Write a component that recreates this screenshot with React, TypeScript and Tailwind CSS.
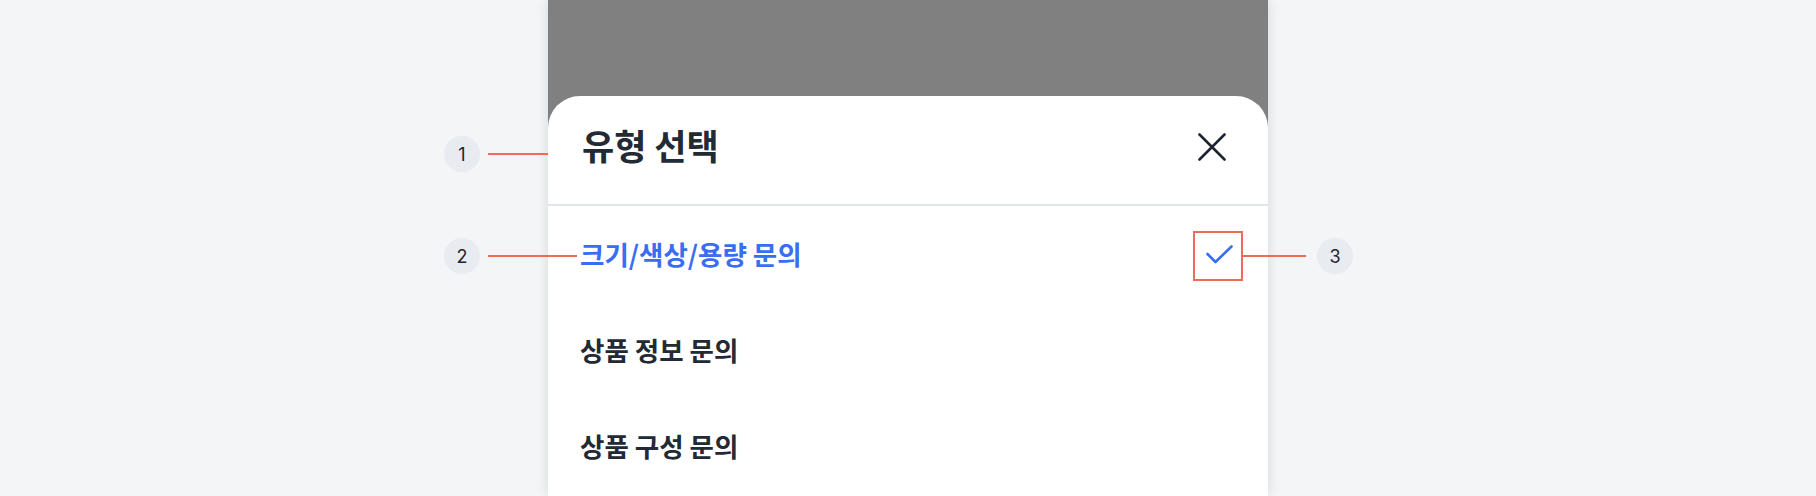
const FONT = '"Noto Sans CJK KR", "Noto Sans", sans-serif';

type Option = { label: string; selected?: boolean };

const options: Option[] = [
  { label: '크기/색상/용량 문의', selected: true },
  { label: '상품 정보 문의' },
  { label: '상품 구성 문의' },
];

function Badge({ n }: { n: number }) {
  return (
    <div
      className="w-[36px] h-[36px] rounded-full bg-[#e8ebef] text-[#1f2530] text-[18px] flex items-center justify-center"
      style={{ fontFamily: '"Inter", sans-serif' }}
    >
      {n}
    </div>
  );
}

export default function App() {
  return (
    <div
      className="relative w-full h-[496px] bg-[#f4f5f7] overflow-hidden flex justify-center"
      style={{ fontFamily: FONT }}
    >
      <div className="relative w-[720px] h-full bg-[#808080] shadow-[0_0_12px_rgba(0,0,0,0.12)]">
        <div className="mt-[96px] bg-white rounded-t-[32px] h-[400px]">
          <div className="h-[110px] flex items-center justify-between pl-[34px] pr-[42px] pb-[6px] border-b-2 border-[#e1e4e8]">
            <h1 className="text-[35px] font-bold text-[#222a36] pb-[4px]">유형 선택</h1>
            <svg width="28" height="28" viewBox="0 0 28 28" fill="none">
              <path d="M1.5 1.5 L26.5 26.5 M26.5 1.5 L1.5 26.5" stroke="#1f2530" strokeWidth="2.6" strokeLinecap="round" />
            </svg>
          </div>
          <ul>
            {options.map((o) => (
              <li key={o.label} className="h-[96px] flex items-center justify-between pl-[32px] pr-[35px]">
                <span className={`text-[26.5px] font-bold ${o.selected ? 'text-[#3a6df2]' : 'text-[#222a36]'}`}>
                  {o.label}
                </span>
                {o.selected && (
                  <svg width="27" height="19" viewBox="0 0 27 19" fill="none">
                    <path d="M1.5 9 L9.5 17 L25.5 1.5" stroke="#3a6df2" strokeWidth="2.6" strokeLinecap="round" strokeLinejoin="round" />
                  </svg>
                )}
              </li>
            ))}
          </ul>
        </div>

        {/* annotation 1 */}
        <div className="absolute left-[-104px] top-[136px] flex items-center">
          <Badge n={1} />
          <div className="w-[60px] h-[2px] bg-[#ef6b55] ml-[8px]" />
        </div>
        {/* annotation 2 */}
        <div className="absolute left-[-104px] top-[238px] flex items-center">
          <Badge n={2} />
          <div className="w-[89px] h-[2px] bg-[#ef6b55] ml-[8px]" />
        </div>
        {/* annotation 3 */}
        <div className="absolute left-[645px] top-[231px] flex items-center">
          <div className="w-[50px] h-[50px] border-2 border-[#ef6b55]" />
          <div className="w-[63px] h-[2px] bg-[#ef6b55]" />
          <div className="ml-[11px]">
            <Badge n={3} />
          </div>
        </div>
      </div>
    </div>
  );
}
